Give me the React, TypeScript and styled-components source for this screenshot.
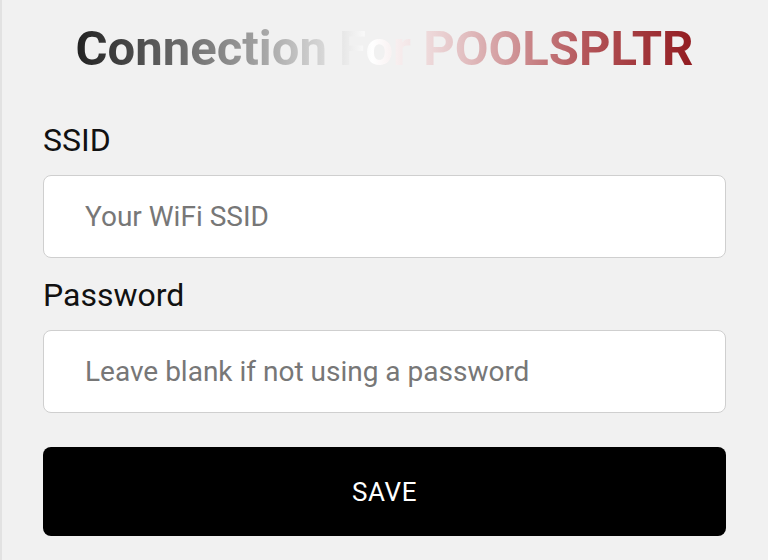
import React from "react";
import styled, { createGlobalStyle } from "styled-components";

const Global = createGlobalStyle`
  html, body { margin: 0; padding: 0; background: #f1f1f1; }
  body { font-family: Roboto, "Liberation Sans", Arial, sans-serif; }
  * { box-sizing: border-box; }
`;

const Page = styled.div`
  min-height: 560px;
  background: #f1f1f1;
  border-left: 2px solid #e2e2e2;
  padding: 21px 42px 0 41px;
  display: flex;
  flex-direction: column;
`;

const Title = styled.h1`
  margin: 0 0 43px;
  align-self: center;
  font-size: 49px;
  line-height: 56px;
  font-weight: 700;
  letter-spacing: 0;
  background: linear-gradient(90deg, #222222 0%, #9a9a9a 28%, #ffffff 48%, #e4c4c6 62%, #b5575b 82%, #921c21 100%);
  -webkit-background-clip: text;
  background-clip: text;
  color: transparent;
`;

const Label = styled.label`
  display: block;
  font-size: 32px;
  line-height: 40px;
  color: #111;
  margin-bottom: 15px;
`;

const Input = styled.input`
  display: block;
  width: 100%;
  height: 83px;
  border: 1px solid #cfcfcf;
  border-radius: 8px;
  background: #fff;
  padding: 0 41px;
  font-family: Roboto, "Liberation Sans", Arial, sans-serif;
  font-size: 28px;
  color: #222;
  margin-bottom: 17px;
  outline: none;
  &::placeholder { color: #777; }
`;

const SaveButton = styled.button`
  margin-top: 17px;
  width: 100%;
  height: 89px;
  border: none;
  border-radius: 8px;
  background: #000;
  color: #fff;
  font-family: Roboto, "Liberation Sans", Arial, sans-serif;
  font-size: 26px;
  letter-spacing: 0.6px;
  cursor: pointer;
`;

export default function App() {
  return (
    <>
      <Global />
      <Page>
        <Title>Connection For POOLSPLTR</Title>
        <Label htmlFor="ssid">SSID</Label>
        <Input id="ssid" placeholder="Your WiFi SSID" />
        <Label htmlFor="pw">Password</Label>
        <Input id="pw" type="password" placeholder="Leave blank if not using a password" />
        <SaveButton>SAVE</SaveButton>
      </Page>
    </>
  );
}
